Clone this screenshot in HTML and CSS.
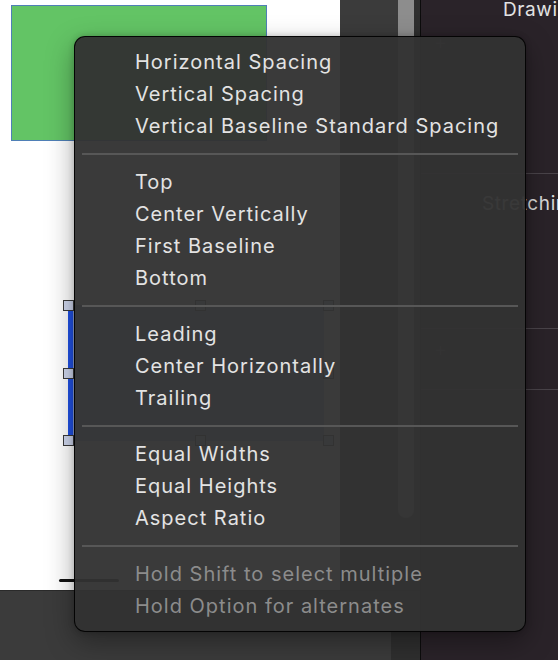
FILE: index.html
```html
<!DOCTYPE html>
<html>
<head>
<meta charset="utf-8">
<link rel="stylesheet" href="styles.css">
</head>
<body>
<div class="app">
  <div class="editor">
    <div class="work">
      <div class="canvas">
        <div class="shape shape-green"></div>
        <div class="shape shape-selected">
          <span class="handle h-tl"></span>
          <span class="handle h-tc"></span>
          <span class="handle h-tr"></span>
          <span class="handle h-ml"></span>
          <span class="handle h-mr"></span>
          <span class="handle h-bl"></span>
          <span class="handle h-bc"></span>
          <span class="handle h-br"></span>
        </div>
        <div class="shape mark"></div>
      </div>
      <div class="gutter">
        <div class="gutter-track"><div class="thumb"></div></div>
        <div class="gutter-edge"></div>
      </div>
    </div>
    <div class="statusbar">
      <div class="status-main"></div>
      <div class="status-end"></div>
    </div>
  </div>
  <div class="inspector">
    <div class="insp-title">Drawing</div>
    <div class="insp-plus plus-top">+</div>
    <div class="insp-sep sep-a"></div>
    <div class="insp-label">Stretching</div>
    <div class="insp-sep sep-b"></div>
    <div class="insp-plus plus-mid">+</div>
    <div class="insp-sep sep-c"></div>
  </div>
</div>

<div class="menu">
  <div class="menu-item">Horizontal Spacing</div>
  <div class="menu-item">Vertical Spacing</div>
  <div class="menu-item">Vertical Baseline Standard Spacing</div>
  <div class="menu-sep"></div>
  <div class="menu-item">Top</div>
  <div class="menu-item">Center Vertically</div>
  <div class="menu-item">First Baseline</div>
  <div class="menu-item">Bottom</div>
  <div class="menu-sep"></div>
  <div class="menu-item">Leading</div>
  <div class="menu-item">Center Horizontally</div>
  <div class="menu-item">Trailing</div>
  <div class="menu-sep"></div>
  <div class="menu-item">Equal Widths</div>
  <div class="menu-item">Equal Heights</div>
  <div class="menu-item">Aspect Ratio</div>
  <div class="menu-sep"></div>
  <div class="menu-item disabled">Hold Shift to select multiple</div>
  <div class="menu-item disabled">Hold Option for alternates</div>
</div>
</body>
</html>
```

FILE: styles.css
```css
* { box-sizing: border-box; }

html, body {
  margin: 0;
  padding: 0;
  width: 558px;
  height: 660px;
  overflow: hidden;
  background: #2a2329;
  font-family: Inter, "Noto Sans", "Liberation Sans", sans-serif;
}

.app {
  display: flex;
  width: 558px;
  height: 660px;
}

.editor {
  display: flex;
  flex-direction: column;
  border-right: 1px solid #0c0c0c;
  flex: none;
  width: 421px;
}

.work {
  display: flex;
  height: 590px;
}

.canvas {
  position: relative;
  width: 340px;
  height: 590px;
  background: #ffffff;
  overflow: hidden;
  flex: none;
}

.shape { position: absolute; }

.shape-green {
  left: 11px;
  top: 5px;
  width: 256px;
  height: 136px;
  background: #63c465;
  border: 1.5px solid #4f7fb6;
}

.shape-selected {
  left: 68px;
  top: 305px;
  width: 256px;
  height: 136px;
  background: #8ea4d8;
  border-left: 5px solid #2152e6;
}

.handle {
  position: absolute;
  width: 11px;
  height: 11px;
  background: #cfd7ee;
  border: 1.5px solid #3a3a3a;
}
.h-tl { left: -10px; top: -5px; }
.h-ml { left: -10px; top: 63px; }
.h-bl { left: -10px; top: 130px; }
.h-tc { left: 122px; top: -5px; }
.h-bc { left: 122px; top: 130px; }
.h-tr { left: 250px; top: -5px; }
.h-mr { left: 250px; top: 63px; }
.h-br { left: 250px; top: 130px; }

.mark {
  left: 59px;
  top: 579px;
  width: 60px;
  height: 3px;
  border-radius: 2px;
  background: #111;
}

.gutter {
  display: flex;
  width: 80px;
  background: #3b3b3b;
}

.gutter-track {
  width: 74px;
  padding-left: 58px;
}

.thumb {
  width: 16px;
  height: 518px;
  background: #8d8d8d;
  border-radius: 0 0 8px 8px;
}

.gutter-edge {
  width: 6px;
  background: #2f2f2f;
}

.statusbar {
  display: flex;
  height: 70px;
  border-top: 1px solid #2a2a2a;
}

.status-main {
  width: 391px;
  background: #3b3b3b;
}

.status-end {
  flex: 1;
  background: #2f2f2f;
}

.inspector {
  flex: 1;
  display: flex;
  flex-direction: column;
  background: #2a2329;
  overflow: hidden;
  white-space: nowrap;
}

.insp-title {
  padding-left: 82px;
  height: 22px;
  line-height: 20px;
  font-size: 19px;
  letter-spacing: 0.6px;
  color: #e2e2e2;
}

.insp-plus {
  padding-left: 13px;
  font-size: 20px;
  font-weight: 300;
  line-height: 20px;
  height: 20px;
  color: #4e4e4e;
}
.plus-top { margin-top: 10px; }

.insp-sep {
  height: 1px;
  background: #4a444a;
}
.sep-a { margin-top: 121px; }

.insp-label {
  margin-top: 19px;
  padding-left: 61px;
  font-size: 19px;
  letter-spacing: 0.6px;
  line-height: 22px;
  height: 22px;
  color: #dadada;
}

.sep-b { margin-top: 113px; }
.plus-mid { margin-top: 10px; }
.sep-c { margin-top: 30px; }

.menu {
  position: absolute;
  left: 74px;
  top: 36px;
  width: 452px;
  height: 596px;
  padding: 9px 0;
  background: rgba(50, 50, 50, 0.96);
  border: 1px solid rgba(0, 0, 0, 0.9);
  border-radius: 11px;
  box-shadow: 0 10px 28px rgba(0, 0, 0, 0.35), 0 0 6px rgba(0, 0, 0, 0.2);
}

.menu-item {
  height: 32px;
  line-height: 32px;
  padding-left: 60px;
  font-size: 20px;
  letter-spacing: 1px;
  color: #e3e3e3;
  white-space: nowrap;
}

.menu-item.disabled {
  color: #8c8c8c;
}

.menu-sep {
  height: 2px;
  margin: 11px 7px;
  background: #575757;
}
```
